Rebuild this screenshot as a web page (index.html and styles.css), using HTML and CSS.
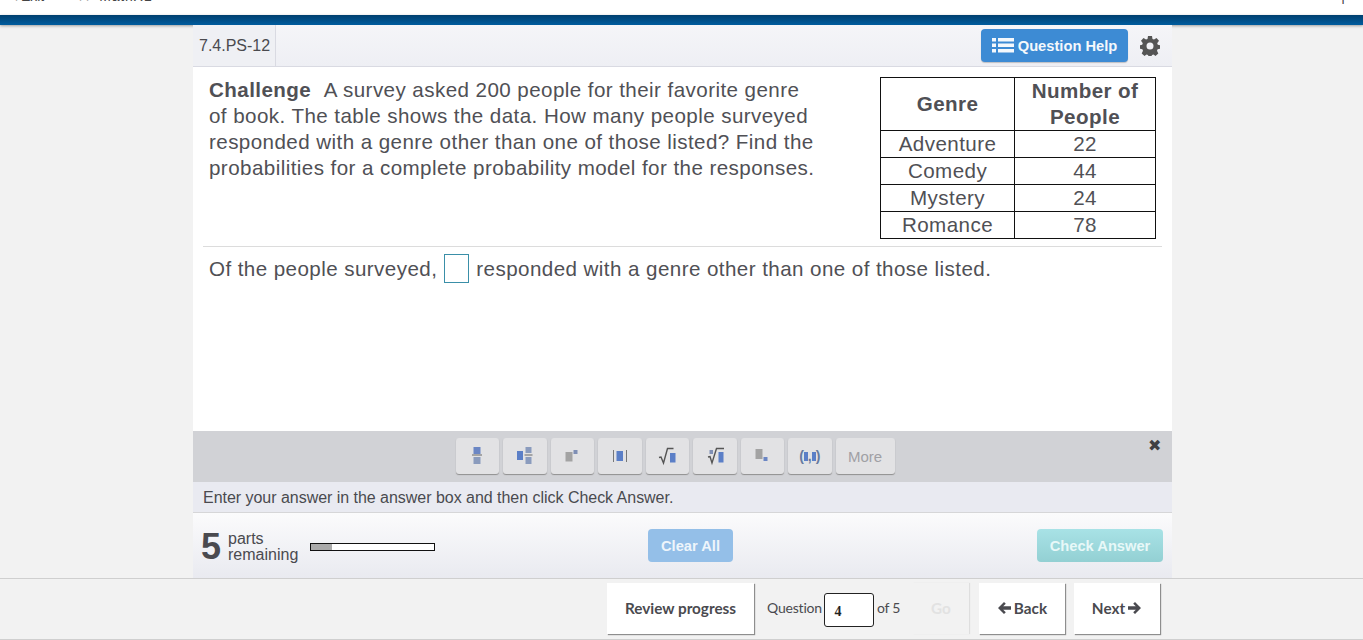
FILE: index.html
```html
<!DOCTYPE html>
<html lang="en">
<head>
    <meta charset="UTF-8">
    <title>7.4.PS-12</title>
    <link rel="stylesheet" href="styles.css">
</head>
<body>

<div class="top-bar">
    <div class="top-left"><span class="exit">&#9666; Exit</span><span class="crumb">&#9666; &#9656; MathXL</span></div>
    <span class="top-right">|</span>
</div>
<div class="blue-bar"></div>

<div class="container">
    <div class="question-head">
        <div class="question-id">7.4.PS-12</div>
        <div class="head-tools">
            <button class="help-btn" type="button">
                <svg class="list-icon" viewBox="0 0 22 15" width="22" height="15"><path d="M0 0h4v3.500H0zM6 0h16v3.500H6zM0 5.500h4V9H0zM6 5.500h16V9H6zM0 11h4v3.500H0zM6 11h16v3.500H6z"/></svg>
                Question Help
            </button>
            <svg class="gear-icon" viewBox="0 0 20 20" width="20" height="20"><path fill-rule="evenodd" d="M8 0h4l.5 3 1.500.6L16.500 2 19 4.800l-1.800 2.400.6 1.500 2.200.5v3.600l-2.400.5-.6 1.500L18.300 17.500 15.500 20l-2-1.600-1.500.6-.4 1H8.400l-.4-1-1.500-.6L4.500 20l-2.800-2.500 1.300-2.700-.6-1.500L0 12.800V9.200l2.200-.5.6-1.500L1 4.800 3.500 2 6 3.600 7.500 3zM10 6.500a3.500 3.500 0 1 0 0 7 3.500 3.500 0 0 0 0-7z"/></svg>
        </div>
    </div>

    <div class="problem">
        <p class="problem-text"><b>Challenge</b>&nbsp; A survey asked 200 people for their favorite genre of book. The table shows the data. How many people surveyed responded with a genre other than one of those listed? Find the probabilities for a complete probability model for the responses.</p>
        <table class="data-table">
            <tr><th class="col-genre">Genre</th><th class="col-num">Number of People</th></tr>
            <tr><td>Adventure</td><td>22</td></tr>
            <tr><td>Comedy</td><td>44</td></tr>
            <tr><td>Mystery</td><td>24</td></tr>
            <tr><td>Romance</td><td>78</td></tr>
        </table>
    </div>

    <div class="answer-area">
        <div class="answer-line"><span>Of the people surveyed,</span><span class="answer-box"></span><span>responded with a genre other than one of those listed.</span></div>
    </div>

    <div class="math-bar">
        <button class="math-btn" type="button">
            <svg viewBox="0 0 14 20" width="14" height="20"><rect x="3.500" y="1" width="7" height="7" fill="#6b86c4"/><rect x="2" y="8.500" width="10" height="1" fill="#666"/><rect x="3.500" y="11" width="7" height="7" fill="#8a9bbd"/></svg>
        </button>
        <button class="math-btn" type="button">
            <svg viewBox="0 0 18 20" width="18" height="20"><rect x="1" y="5" width="6" height="9" fill="#5b7fc7"/><rect x="9.500" y="1" width="6" height="6" fill="#8a9bbd"/><rect x="8.500" y="8.500" width="8" height="1" fill="#666"/><rect x="9.500" y="11" width="6" height="7" fill="#8a9bbd"/></svg>
        </button>
        <button class="math-btn" type="button">
            <svg viewBox="0 0 14 20" width="14" height="20"><rect x="0.500" y="6" width="7" height="9.500" fill="#a3a3a3"/><rect x="8.500" y="4" width="4" height="4" fill="#7f8fb5"/></svg>
        </button>
        <button class="math-btn" type="button">
            <svg viewBox="0 0 16 20" width="16" height="20"><rect x="1" y="4" width="1" height="12" fill="#777"/><rect x="14" y="4" width="1" height="12" fill="#777"/><rect x="4.500" y="5" width="6.500" height="10" fill="#5b7fc7"/></svg>
        </button>
        <button class="math-btn" type="button">
            <svg viewBox="0 0 18 20" width="18" height="20"><path d="M1 11.500l2-.5 2.500 6 4-14.500h6" fill="none" stroke="#555" stroke-width="1.400"/><rect x="12" y="7" width="5.500" height="9.500" fill="#5b7fc7"/></svg>
        </button>
        <button class="math-btn" type="button">
            <svg viewBox="0 0 18 20" width="18" height="20"><rect x="3.500" y="4" width="3.500" height="4" fill="#7f8fb5"/><path d="M2 11l2-.5 2 6.500 4.500-14.500H18" fill="none" stroke="#555" stroke-width="1.400"/><rect x="12.500" y="6" width="5" height="10.500" fill="#5b7fc7"/></svg>
        </button>
        <button class="math-btn" type="button">
            <svg viewBox="0 0 14 20" width="14" height="20"><rect x="0.500" y="3" width="7" height="10" fill="#a3a3a3"/><rect x="8.500" y="11" width="4" height="4" fill="#6b86c4"/></svg>
        </button>
        <button class="math-btn paren-btn" type="button">(<i></i>,<i></i>)</button>
        <button class="math-btn more-btn" type="button">More</button>
        <span class="close-x">&#10006;</span>
    </div>

    <div class="instruction">Enter your answer in the answer box and then click Check Answer.</div>

    <div class="action-row">
        <div class="parts">
            <span class="parts-num">5</span>
            <span class="parts-label">parts<br>remaining</span>
            <div class="progress"><div class="progress-fill"></div></div>
        </div>
        <button class="clear-btn" type="button">Clear All</button>
        <button class="check-btn" type="button">Check Answer</button>
    </div>
</div>

<div class="footer">
    <button class="foot-btn review-btn" type="button">Review progress</button>
    <div class="question-nav">
        <span>Question</span>
        <input class="question-input" type="text" value="4">
        <span>of 5</span>
    </div>
    <button class="foot-btn go-btn" type="button">Go</button>
    <button class="foot-btn back-btn" type="button">
        <svg viewBox="0 0 15 14" width="15" height="14"><path d="M7 1L1 7l6 6 1.800-1.800L6.200 8.700H14V5.300H6.200L8.800 2.800z"/></svg>
        Back
    </button>
    <button class="foot-btn next-btn" type="button">
        Next
        <svg viewBox="0 0 15 14" width="15" height="14"><path d="M8 1l6 6-6 6-1.800-1.800 2.600-2.500H1V5.300h7.800L6.200 2.800z"/></svg>
    </button>
</div>

</body>
</html>
```

FILE: styles.css
```css
* {
    margin: 0;
    padding: 0;
    box-sizing: border-box;
}

body {
    height: 640px;
    overflow: hidden;
    font-family: "Liberation Sans", Arial, sans-serif;
    background-color: #f2f2f2;
    color: #4a4a4f;
    display: flex;
    flex-direction: column;
}

button {
    font-family: inherit;
    border: none;
}

.top-bar {
    height: 15px;
    background-color: #fff;
    display: flex;
    justify-content: space-between;
    align-items: flex-end;
    padding: 0 18px 12px 10px;
    font-size: 14px;
    line-height: 13px;
    color: #444;
    overflow: hidden;
}

.top-left .exit {
    margin-right: 30px;
}

.top-left .crumb {
    letter-spacing: 0.8px;
}

.blue-bar {
    height: 10px;
    background: linear-gradient(#00406f, #005c9e);
    box-shadow: 0 1px 3px rgba(0, 0, 0, 0.35);
    flex-shrink: 0;
}

.container {
    width: 979px;
    height: 553px;
    margin-left: 193px;
    background-color: #fff;
    display: flex;
    flex-direction: column;
}

.question-head {
    height: 42px;
    flex-shrink: 0;
    display: flex;
    justify-content: space-between;
    background: linear-gradient(#f5f5f8, #eeeff4);
    border-bottom: 1px solid #d9dae2;
}

.question-id {
    width: 83px;
    padding-left: 6px;
    font-size: 16px;
    line-height: 41px;
    border-right: 1px solid #d9dae2;
    background-color: #eff0f4;
}

.head-tools {
    display: flex;
    align-items: center;
    padding-right: 12px;
}

.help-btn {
    width: 147px;
    height: 33px;
    margin-right: 1px;
    background-color: #3d8bd4;
    color: #f4f8fc;
    font-size: 14.7px;
    font-weight: bold;
    border-radius: 4px;
    display: flex;
    align-items: center;
    justify-content: center;
    gap: 4px;
    box-shadow: 0 1px 1px rgba(0, 0, 0, 0.2);
}

.list-icon {
    fill: #f4f8fc;
}

.gear-icon {
    fill: #555;
    margin-left: 11px;
}

.problem {
    height: 180px;
    flex-shrink: 0;
    margin: 0 10px;
    padding: 10px 6px 0 6px;
    display: flex;
    justify-content: space-between;
    border-bottom: 1px solid #dcdcdc;
}

.problem-text {
    width: 610px;
    font-size: 20.6px;
    letter-spacing: 0.42px;
    line-height: 26px;
    color: #505055;
}

.problem-text b {
    margin-right: 1.5px;
}

.data-table {
    width: 276px;
    height: 162px;
    border-collapse: collapse;
    font-size: 20.6px;
    letter-spacing: 0.42px;
    line-height: 26px;
    text-align: center;
    align-self: flex-start;
    color: #505055;
}

.data-table th,
.data-table td {
    border: 1px solid #111;
    font-weight: normal;
}

.data-table th {
    font-weight: bold;
}

.col-genre {
    width: 134px;
}

.answer-area {
    flex: 1;
    padding: 7px 16px 0;
}

.answer-line {
    font-size: 20.6px;
    letter-spacing: 0.42px;
    line-height: 26px;
    color: #505055;
    display: flex;
    align-items: center;
    gap: 7px;
}

.answer-box {
    width: 25px;
    height: 29px;
    background-color: #fff;
    border: 1px solid #3a8fa8;
}

.math-bar {
    position: relative;
    height: 51px;
    flex-shrink: 0;
    background-color: #d1d2d6;
    display: flex;
    justify-content: center;
    align-items: flex-start;
    gap: 4px;
    padding: 7px 15px 0 0;
}

.math-btn {
    width: 43.5px;
    height: 36px;
    background-color: #e2e2e4;
    border-radius: 3px;
    box-shadow: 0 1px 1px #8f8f8f;
    display: flex;
    align-items: center;
    justify-content: center;
}

.paren-btn {
    color: #667a9f;
    font-size: 14px;
    font-weight: bold;
}

.paren-btn i {
    display: inline-block;
    width: 4px;
    height: 9px;
    background-color: #5b7fc7;
}

.more-btn {
    width: 59px;
    color: #a0a0a4;
    font-size: 15px;
}

.close-x {
    position: absolute;
    top: 5px;
    right: 11px;
    font-size: 16px;
    color: #3f3f42;
}

.instruction {
    height: 31px;
    flex-shrink: 0;
    padding-left: 10px;
    font-size: 16px;
    letter-spacing: -0.03px;
    line-height: 31px;
    background-color: #e9eaf1;
    border-bottom: 1px solid #d6d6d8;
}

.action-row {
    height: 65px;
    flex-shrink: 0;
    display: flex;
    align-items: center;
    justify-content: space-between;
    padding: 0 9px 0 8px;
    background: linear-gradient(#fbfbfc, #e9eaf0);
}

.parts {
    width: 447px;
    margin-top: 2px;
    display: flex;
    align-items: center;
}

.parts-num {
    font-size: 36px;
    font-weight: bold;
    line-height: 36px;
    margin-right: 7px;
}

.parts-label {
    font-size: 16px;
    line-height: 16px;
    margin-right: 12px;
}

.progress {
    width: 125px;
    height: 8px;
    border: 1px solid #111;
    background-color: #fff;
}

.progress-fill {
    width: 21px;
    height: 100%;
    background-color: #aaa;
}

.clear-btn {
    width: 85px;
    height: 33px;
    margin-right: 304px;
    background-color: #94bfe8;
    color: #eef5fb;
    font-size: 14.7px;
    font-weight: bold;
    border-radius: 4px;
}

.check-btn {
    width: 126px;
    height: 33px;
    background: linear-gradient(#a8e2e6, #93d0d3);
    color: #e8f8f8;
    font-size: 14.7px;
    font-weight: bold;
    border-radius: 4px;
}

/* Fixed bottom bar */
.footer {
    height: 62px;
    flex-shrink: 0;
    display: flex;
    align-items: flex-start;
    padding: 4px 0 0 607px;
    background-color: #f2f2f2;
    border-top: 1px solid #cfcfcf;
    border-bottom: 1px solid #cfcfcf;
    font-family: Lato, sans-serif;
    font-size: 14px;
}

.foot-btn {
    height: 51px;
    padding-bottom: 2px;
    background-color: #fff;
    color: #4a4a4f;
    font-family: Lato, sans-serif;
    font-size: 15.3px;
    font-weight: bold;
    box-shadow: 1px 1px 1px #8e8e8e;
    display: flex;
    align-items: center;
    justify-content: center;
    gap: 2px;
}

.foot-btn svg {
    fill: #4a4a4f;
}

.review-btn {
    width: 147px;
}

.question-nav {
    width: 159px;
    height: 51px;
    padding: 0 0 2px 13px;
    display: flex;
    align-items: center;
    gap: 2.500px;
    letter-spacing: -0.2px;
}

.question-input {
    width: 50px;
    height: 34px;
    margin-top: 5px;
    padding: 3px 0 0 9px;
    border: 1px solid #222;
    border-radius: 3px;
    font-family: "Liberation Serif", serif;
    font-size: 14px;
    font-weight: bold;
    color: #222;
}

.go-btn {
    width: 56px;
    background-color: #f2f2f2;
    color: #e2e2e2;
    box-shadow: 1px 0 1px #dedede;
}

.back-btn {
    width: 86px;
    margin-left: 10px;
}

.next-btn {
    width: 86px;
    margin-left: 9px;
}
```
